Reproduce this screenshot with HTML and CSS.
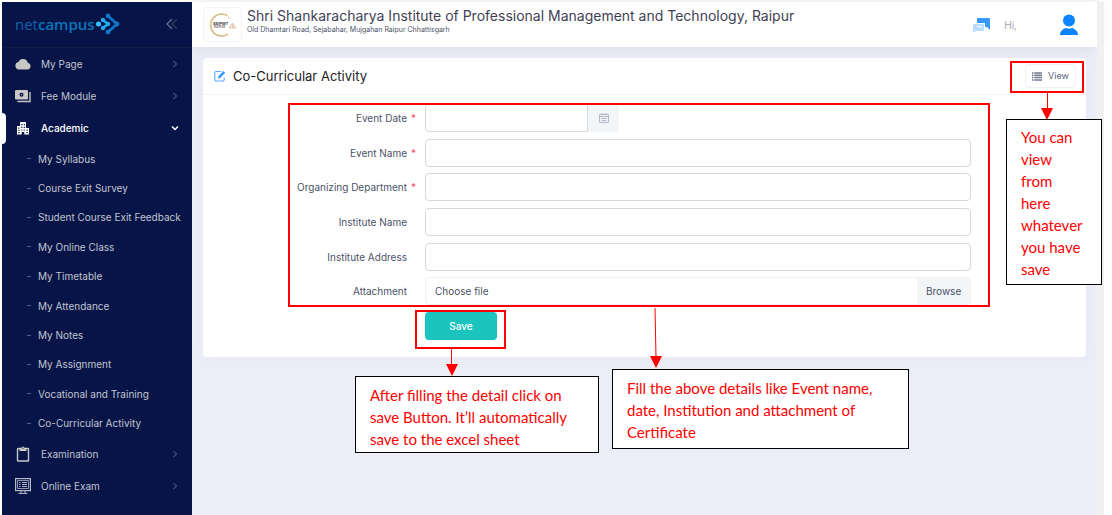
FILE: index.html
```html
<!DOCTYPE html>
<html lang="en">
<head>
<meta charset="utf-8">
<meta name="viewport" content="width=device-width, initial-scale=1">
<title>Co-Curricular Activity</title>
<link rel="stylesheet" href="styles.css">
</head>
<body>
<div class="app">
  <aside class="sidebar">
    <div class="brand">
      <a class="logo" href="#" aria-label="netcampus"><span class="logo-net">net</span><span class="logo-campus">campus</span>
        <svg width="26" height="22" viewBox="0 0 26 22" fill="none" stroke-linecap="round" stroke-linejoin="round">
          <path d="M13 3l9 8-9 8" stroke="#1274c4" stroke-width="3"/>
          <circle cx="13" cy="3" r="2.4" fill="#1274c4"/><circle cx="13" cy="19" r="2.4" fill="#1274c4"/><circle cx="22" cy="11" r="2.4" fill="#1274c4"/>
          <path d="M8 7l5 4-5 4" stroke="#25a9f0" stroke-width="2.8"/>
          <circle cx="8" cy="7" r="2.2" fill="#25a9f0"/><circle cx="8" cy="15" r="2.2" fill="#25a9f0"/><circle cx="13" cy="11" r="2.2" fill="#25a9f0"/>
          <circle cx="3.500" cy="11" r="2.500" fill="#35c4ff"/>
        </svg></a>
      <button class="collapse" type="button" aria-label="Collapse menu">
        <svg width="12" height="12" viewBox="0 0 12 12" fill="none"><path d="M6 1L1 6l5 5" stroke="#6c7393" stroke-width="1.2"/><path d="M11 1L6 6l5 5" stroke="#363f69" stroke-width="1.2"/></svg>
      </button>
    </div>
    <nav>
      <a class="item" href="#">
        <svg class="icon" viewBox="0 0 16 16"><path d="M4 13.500a3.800 3.800 0 0 1-.6-7.500A5 5 0 0 1 12.800 6.800 3.400 3.400 0 0 1 12.600 13.500z" fill="#c9c7c5"/></svg>
        <span>My Page</span>
        <svg class="chev" viewBox="0 0 8 8"><path d="M2.500 1l3 3-3 3"/></svg>
      </a>
      <a class="item" href="#">
        <svg class="icon" viewBox="0 0 16 16"><rect x="0" y="2" width="13" height="9.500" rx="1.200" fill="#c9c7c5"/><circle cx="6.500" cy="6.700" r="2" fill="#061447"/><path d="M6.500 6v1.400" stroke="#c9c7c5" stroke-width=".8"/><path d="M2.500 13.500H15V4" fill="none" stroke="#c9c7c5" stroke-width="1.400"/></svg>
        <span>Fee Module</span>
        <svg class="chev" viewBox="0 0 8 8"><path d="M2.500 1l3 3-3 3"/></svg>
      </a>
      <a class="item active" href="#" aria-expanded="true">
        <svg class="icon" viewBox="0 0 16 16"><path d="M2 14.500V6h3V2h6v6h3v6.500H9.300V12H6.700v2.500z" fill="#fff"/><path d="M3.300 7.500h1.200v1.200H3.300zM3.300 9.800h1.200V11H3.300zM3.300 12h1.200v1.200H3.300zM6.200 4h1.200v1.200H6.200zM8.700 4h1.200v1.200H8.700zM6.200 6.700h1.200v1.200H6.200zM8.700 6.700h1.200v1.200H8.700zM6.200 9.400h1.200v1.200H6.200zM8.700 9.400h1.200v1.200H8.700zM11.500 9.500h1.200v1.200h-1.200zM11.500 12h1.200v1.200h-1.200z" fill="#061447"/></svg>
        <span>Academic</span>
        <svg class="chev" viewBox="0 0 8 8"><path d="M1 2.500l3 3 3-3"/></svg>
      </a>
      <div class="submenu">
        <a href="#">My Syllabus</a>
        <a href="#">Course Exit Survey</a>
        <a href="#">Student Course Exit Feedback</a>
        <a href="#">My Online Class</a>
        <a href="#">My Timetable</a>
        <a href="#">My Attendance</a>
        <a href="#">My Notes</a>
        <a href="#">My Assignment</a>
        <a href="#">Vocational and Training</a>
        <a href="#">Co-Curricular Activity</a>
      </div>
      <a class="item" href="#">
        <svg class="icon" viewBox="0 0 16 16"><rect x="2.500" y="2.500" width="11" height="12.500" rx=".6" fill="none" stroke="#c9c7c5" stroke-width="1.400"/><path d="M4.500 2h2a1.500 1.500 0 0 1 3 0h2v3h-7z" fill="#c9c7c5"/><circle cx="8" cy="2.200" r=".6" fill="#061447"/></svg>
        <span>Examination</span>
        <svg class="chev" viewBox="0 0 8 8"><path d="M2.500 1l3 3-3 3"/></svg>
      </a>
      <a class="item" href="#">
        <svg class="icon" viewBox="0 0 16 16" fill="none" stroke="#b9bac6"><rect x=".6" y=".6" width="14.800" height="12" stroke-width="1.200"/><path d="M2.500 10.500v-8h11v8z" stroke-width=".8"/><path d="M4 4.500h1.500M7 4.500h5M4 6.500h1.500M7 6.500h5M4 8.500h1.500M7 8.500h5M6 13v2M10 13v2M3.500 15.400h9"/></svg>
        <span>Online Exam</span>
        <svg class="chev" viewBox="0 0 8 8"><path d="M2.500 1l3 3-3 3"/></svg>
      </a>
    </nav>
  </aside>

  <div class="page">
    <header class="topbar">
      <div class="crest">
        <svg width="30" height="26" viewBox="0 0 30 26" fill="none"><path d="M19 3.500A11 11 0 1 0 20 22" stroke="#d6b878" stroke-width="1.500"/><path d="M19 3.500A11 11 0 0 1 22 7" stroke="#eadcc0"/><path d="M24.500 11l-3.500 5h7zM24.500 12v4M22.500 14l2 2 2-2" stroke="#dfb98e" stroke-width=".8"/><text x="5" y="13" class="crest-name">SSIPMT</text><text x="6" y="16" class="crest-city">RAIPUR</text></svg>
      </div>
      <div class="org">
        <h1>Shri Shankaracharya Institute of Professional Management and Technology, Raipur</h1>
        <p>Old Dhamtari Road, Sejabahar, Mujgahan Raipur Chhattisgarh</p>
      </div>
      <div class="user">
        <button type="button" aria-label="Messages"><svg width="18" height="16" viewBox="0 0 18 16"><path d="M5 1h11a1 1 0 0 1 1 1v11l-3-3H12V6H4V2a1 1 0 0 1 1-1z" fill="#3699ff"/><path d="M1 7h9a1 1 0 0 1 1 1v5a1 1 0 0 1-1 1H3l-3 1.500V8a1 1 0 0 1 1-1z" fill="#b8dbff"/><path d="M4 9.500h4v1.500" fill="none" stroke="#fff"/></svg></button>
        <span class="hi">Hi,</span>
        <button type="button" aria-label="Profile"><svg width="20" height="22" viewBox="0 0 20 22"><circle cx="10" cy="6.500" r="6" fill="#0a84ff"/><path d="M1 21c0-4 3.500-6.500 6-7 2 1 4 1 6 0 2.500.5 6 3 6 7z" fill="#0a84ff"/></svg></button>
      </div>
    </header>

    <main class="card">
      <div class="card-head">
        <svg width="12" height="12" viewBox="0 0 12 12" fill="none"><path d="M7.500 1.500H2.300A1.500 1.500 0 0 0 .8 3v6.500A1.500 1.500 0 0 0 2.300 11h6.400a1.500 1.500 0 0 0 1.500-1.500V7.500" stroke="#5aa9ff" stroke-width="1.100"/><path d="M4 8.500l.3-2.300L9.500 1l1.800 1.800L6.200 8z" fill="#3699ff"/></svg>
        <h2>Co-Curricular Activity</h2>
        <button class="view" type="button"><svg width="10" height="9" viewBox="0 0 10 9"><path d="M0 1h1.500M0 3.300h1.500M0 5.600h1.500M0 8h1.500M2.300 1H10M2.300 3.300H10M2.300 5.600H10M2.300 8H10" stroke="#717991" stroke-width="1.500"/></svg>View</button>
      </div>
      <form class="form">
        <label for="date">Event Date <b>*</b></label>
        <div class="date"><input id="date" type="text"><button type="button" aria-label="Pick a date"><svg width="10" height="10" viewBox="0 0 10 10" fill="none" stroke="#b5b5c3"><path d="M.5 1.500h9v8h-9zM.5 3.500h9M3 0v2M7 0v2M2.500 5.500h5M2.500 7.500h5"/></svg></button></div>
        <label for="name">Event Name <b>*</b></label>
        <input id="name" type="text">
        <label for="dept">Organizing Department <b>*</b></label>
        <input id="dept" type="text">
        <label for="inst">Institute Name</label>
        <input id="inst" type="text">
        <label for="addr">Institute Address</label>
        <input id="addr" type="text">
        <label for="file">Attachment</label>
        <div class="file"><input id="file" type="file"><span class="file-name">Choose file</span><span class="file-browse">Browse</span></div>
        <button class="save" type="submit">Save</button>
      </form>

      <div class="mark mark-view"></div>
      <div class="mark mark-form"></div>
      <div class="mark mark-save"></div>
      <svg class="arrow arrow-view" width="12" height="27" viewBox="0 0 12 27"><path d="M6.500 0v16" stroke="red"/><path d="M0 15h12L6 27z" fill="red"/></svg>
      <svg class="arrow arrow-save" width="12" height="27" viewBox="0 0 12 27"><path d="M5.500 0v16" stroke="red"/><path d="M0 15h12L6 27z" fill="red"/></svg>
      <svg class="arrow arrow-form" width="12" height="60" viewBox="0 0 12 60"><path d="M5 0l1 49" stroke="red"/><path d="M0 48h12L6 60z" fill="red"/></svg>
      <p class="note note-view">You can view from here whatever you have save</p>
      <p class="note note-save">After filling the detail click on save Button. It’ll automatically save to the excel sheet</p>
      <p class="note note-form">Fill the above details like Event name, date, Institution and attachment of Certificate</p>
    </main>
  </div>
  <div class="scroll-track"></div>
</div>
</body>
</html>
```
FILE: styles.css
```css
* { box-sizing: border-box; }

body {
  margin: 0;
  background: #fff;
  color: #4b5268;
  font: 10px/16px Inter, "Open Sans", sans-serif;
}

h1, h2, p { margin: 0; font-weight: 400; }
a { color: inherit; text-decoration: none; }
button, input { font: inherit; color: inherit; }
button { padding: 0; border: 0; background: none; cursor: pointer; }
svg { display: block; flex: none; }

.app {
  display: flex;
  min-height: 100vh;
  padding: 2px 8px 0 2px;
}

/* Sidebar */
.sidebar {
  position: relative;
  z-index: 1;
  flex: none;
  width: 190px;
  background: #061447;
  color: #c3c4d0;
}

.brand {
  display: flex;
  align-items: center;
  justify-content: space-between;
  height: 46px;
  padding: 0 14px 2px 13px;
  border-bottom: 1px solid #141d45;
}

.logo {
  display: flex;
  align-items: center;
  font: 15px/24px "Open Sans", sans-serif;
}
.logo-net { color: #1262a8; font-weight: 400; }
.logo-campus { color: #0c74bd; font-weight: 600; }

.item {
  position: relative;
  display: flex;
  align-items: center;
  gap: 10px;
  height: 32px;
  padding: 0 13px;
}
.item span { flex: 1; }
.icon { width: 16px; height: 16px; }
.chev {
  width: 8px;
  height: 8px;
  fill: none;
  stroke: #686f90;
}
.active { color: #fff; font-weight: 500; }
.active .chev { stroke: #fff; stroke-width: 1.5; }
.active::before {
  content: "";
  position: absolute;
  left: 0;
  top: 1px;
  bottom: 0;
  width: 4px;
  border-radius: 0 4px 4px 0;
  background: #fff;
}

.submenu {
  display: grid;
  grid-auto-rows: 1fr;
  min-height: 294px;
}
.submenu a {
  display: flex;
  align-items: center;
  gap: 7px;
  padding-left: 25px;
}
.submenu a::before {
  content: "";
  width: 4px;
  height: 1px;
  background: #565d80;
}

/* Page */
.page {
  flex: 1;
  min-width: 0;
  background: #ebedf7;
}
.scroll-track {
  flex: none;
  width: 7px;
  background: #f0f0f0;
}

.topbar {
  display: flex;
  align-items: center;
  gap: 5px;
  height: 45px;
  padding: 0 18px 0 11px;
  background: #fff;
  box-shadow: 0 1px 12px #d9dae8;
}
.crest {
  display: grid;
  place-items: center;
  width: 39px;
  height: 35px;
  border: 1px solid #f3f3f6;
  border-radius: 4px;
}
.crest-name { fill: #444; font: 700 4px Inter, sans-serif; }
.crest-city { fill: #777; font: 700 3px Inter, sans-serif; }
.org { flex: 1; padding-bottom: 7px; }
.org h1 { color: #3f4254; font-size: 14px; line-height: 18px; }
.org p { font-size: 7px; line-height: 10px; }
.user { display: flex; align-items: center; gap: 13px; }
.hi { margin-right: 29px; color: #a4a6b5; }

/* Card */
.card {
  position: relative;
  margin: 11px 11px 0;
  background: #fff;
  border-radius: 4px;
  box-shadow: 0 0 12px #e6e7f2;
}
.card-head {
  display: flex;
  align-items: center;
  gap: 7px;
  height: 37px;
  padding: 0 10px 0 11px;
  border-bottom: 1px solid #f2f2f7;
}
.card-head h2 { flex: 1; color: #212121; font-size: 13px; }
.view {
  display: flex;
  align-items: center;
  justify-content: center;
  gap: 6px;
  width: 51px;
  height: 24px;
  border: 1px solid #f1f1f5;
  border-radius: 4px;
  color: #5e6278;
  font-size: 9px;
}

.form {
  display: grid;
  grid-template-columns: 214px 1fr;
  gap: 6px 8px;
  align-items: center;
  align-content: space-between;
  min-height: 262px;
  padding: 9px 13% 17px 0;
}
.form label { padding-right: 10px; text-align: right; }
.form label b {
  float: right;
  width: 9px;
  margin-right: -9px;
  color: #f64e60;
  font-weight: 400;
}
.form input[type="text"] {
  width: 100%;
  height: 28px;
  padding: 0 10px;
  border: 1px solid #d6d8dc;
  border-radius: 4px;
  background: #fff;
}
.date { display: flex; width: 194px; }
.date input[type="text"] { flex: 1; min-width: 0; border-radius: 4px 0 0 4px; }
.date button {
  display: grid;
  place-items: center;
  width: 31px;
  background: #f3f6f9;
  border-radius: 0 4px 4px 0;
}
.file {
  position: relative;
  display: flex;
  height: 28px;
  border: 1px solid #f0f1f5;
  border-radius: 4px;
  line-height: 26px;
}
.file input { position: absolute; inset: 0; width: 100%; opacity: 0; }
.file-name { flex: 1; padding-left: 9px; }
.file-browse { padding: 0 9px; background: #f3f6f9; }
.save {
  grid-column: 2;
  width: 72px;
  height: 28px;
  border-radius: 4px;
  background: #1bc5bd;
  color: #fff;
  font-weight: 500;
}

/* Annotations drawn over the card */
.mark { position: absolute; border: 2px solid red; pointer-events: none; }
.mark-view { top: 3px; right: 2px; width: 74px; height: 32px; }
.mark-form { top: 45px; left: 85px; right: 96px; height: 204px; }
.mark-save { top: 252px; left: 212px; width: 91px; height: 39px; }
.arrow { position: absolute; }
.arrow-view { top: 35px; right: 33px; }
.arrow-save { top: 291px; left: 243px; }
.arrow-form { top: 250px; left: 447px; }
.note {
  position: absolute;
  padding: 7px 14px;
  border: 1px solid #000;
  background: #fff;
  color: red;
  font: 15px/22px Lato, sans-serif;
}
.note-view { top: 61px; right: -16px; width: 96px; padding: 6px 16px 4px 14px; }
.note-save { top: 318px; left: 152px; width: 244px; height: 77px; }
.note-form { top: 311px; left: 409px; width: 297px; height: 80px; }
```
